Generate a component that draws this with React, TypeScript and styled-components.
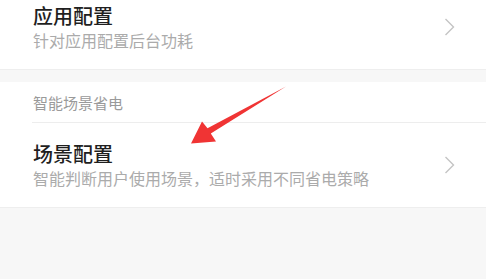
import React from "react";
import styled, { createGlobalStyle } from "styled-components";

const Global = createGlobalStyle`
  html, body { margin: 0; padding: 0; background: #f7f7f7; }
  body { font-family: "Noto Sans CJK SC", "Noto Sans", sans-serif; overflow: hidden; }
`;

const Page = styled.div`
  position: relative;
  width: 486px;
  height: 279px;
  overflow: hidden;
  background: #f7f7f7;
`;

const Scroll = styled.div`
  margin-top: -15px;
  display: flex;
  flex-direction: column;
`;

const Group = styled.section<{ $gap?: boolean }>`
  background: #fff;
  margin-top: ${(p) => (p.$gap ? "12px" : "0")};
  border-bottom: 1px solid #eeeeee;
`;

const Header = styled.div`
  height: 40px;
  margin-left: 32px;
  display: flex;
  align-items: center;
  padding-left: 1px;
  font-size: 15px;
  color: #9a9a9a;
  border-bottom: 1px solid #ededed;
`;

const Row = styled.div`
  height: 84px;
  box-sizing: border-box;
  padding: 0 31px 0 33px;
  display: flex;
  align-items: center;
  justify-content: space-between;
`;

const Texts = styled.div`
  display: flex;
  flex-direction: column;
`;

const Title = styled.div`
  font-size: 20px;
  line-height: 26px;
  font-weight: 500;
  color: #1f1f1f;
`;

const Sub = styled.div`
  font-size: 16px;
  line-height: 22px;
  color: #ababab;
`;

const Chevron = () => (
  <svg width="11" height="18" viewBox="0 0 11 18">
    <polyline points="1.5,1 9.5,9 1.5,17" fill="none" stroke="#c4c4c4" strokeWidth="1.4" />
  </svg>
);

const Arrow = styled.svg`
  position: absolute;
  left: 0;
  top: 0;
  pointer-events: none;
`;

function Item({ title, sub }: { title: string; sub: string }) {
  return (
    <Row>
      <Texts>
        <Title>{title}</Title>
        <Sub>{sub}</Sub>
      </Texts>
      <Chevron />
    </Row>
  );
}

export default function App() {
  return (
    <Page>
      <Global />
      <Scroll>
        <Group>
          <Item title="应用配置" sub="针对应用配置后台功耗" />
        </Group>
        <Group $gap>
          <Header>智能场景省电</Header>
          <Item title="场景配置" sub="智能判断用户使用场景，适时采用不同省电策略" />
        </Group>
      </Scroll>
      <Arrow width="486" height="279" viewBox="0 0 486 279">
        <polygon
          points="191,143.5 202,121.5 207.5,128.2 286,86.5 210.8,133.6 216,141.5"
          fill="#f03434"
        />
      </Arrow>
    </Page>
  );
}
